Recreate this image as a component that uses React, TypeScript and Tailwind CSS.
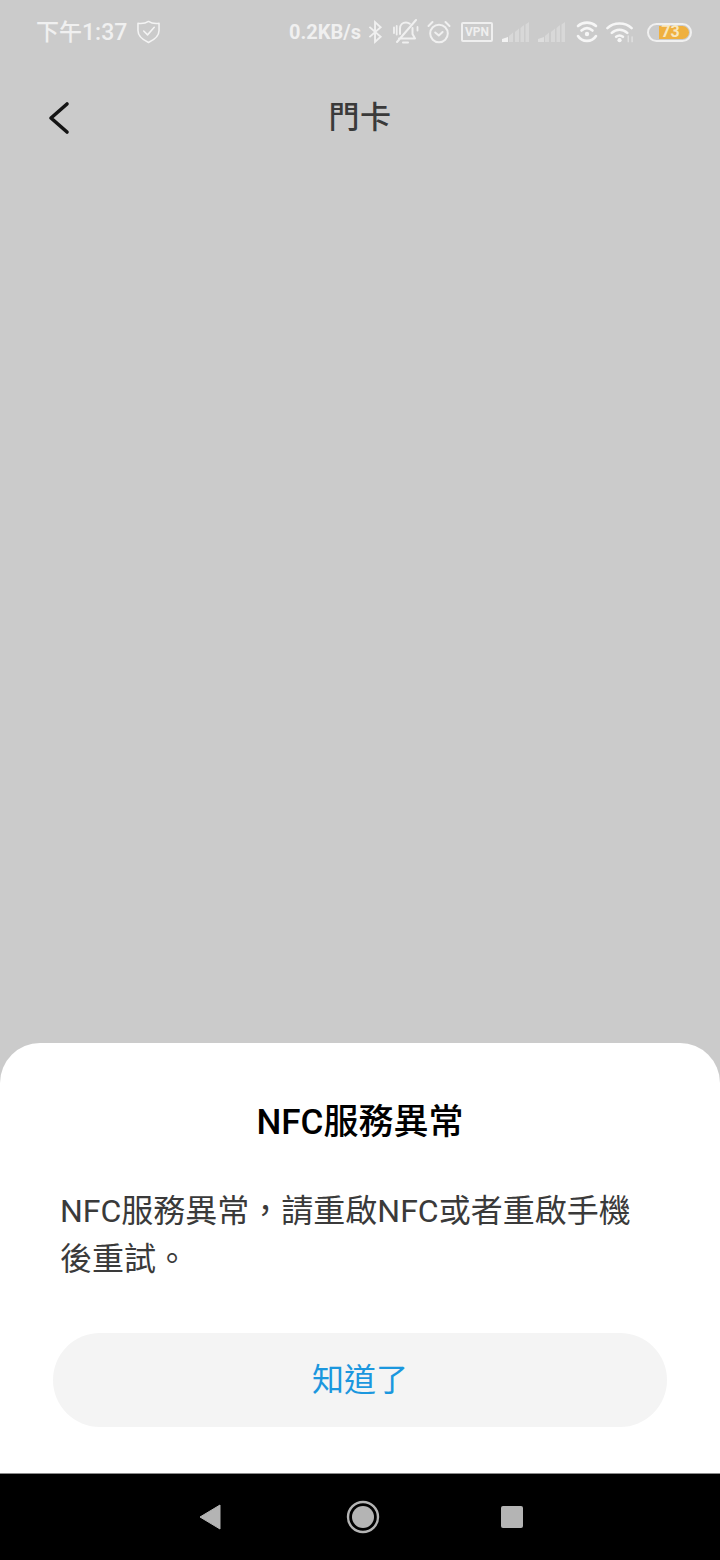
const cjk = "font-['Roboto','Noto_Sans_CJK_TC',sans-serif]";

function Shield() {
  return (
    <svg width="23" height="24" viewBox="0 0 24 25" fill="none" stroke="#f4f4f4" strokeWidth="1.6" strokeLinejoin="round" strokeLinecap="round">
      <path d="M12 1.5 C15 3.5 19 4 23 3.5 V11 C23 16.5 18.5 20.5 12 23.5 C5.5 20.5 1 16.5 1 11 V3.5 C5 4 9 3.5 12 1.5 Z" />
      <path d="M7 11.5 L11 15.5 L18 7.5" />
    </svg>
  );
}
function BT() {
  return (
    <svg width="15" height="24" viewBox="0 0 16 24" fill="none" stroke="#f0f0f0" strokeWidth="2">
      <path d="M1.5 6.5 L13.5 17 L7.5 22.5 V1.5 L13.5 7 L1.5 17.5" />
    </svg>
  );
}
function Bell() {
  return (
    <svg width="28" height="26" viewBox="0 0 28 26" fill="none" stroke="#f0f0f0" strokeWidth="2" strokeLinecap="round" strokeLinejoin="round">
      <path d="M8 15 V9.5 C8 6 10.5 3.5 14 3.5 C15.5 3.5 16.8 4 17.8 4.8" />
      <path d="M20.5 9 V15 L23 19.5 H7 M24 1 L5 23 M11 23.5 H16" />
      <path d="M2 8.5 V14 M4.7 7 V15.5 M25.5 8 V11.5" strokeWidth="1.8" />
    </svg>
  );
}
function Alarm() {
  return (
    <svg width="24" height="24" viewBox="0 0 24 24" fill="none" stroke="#f0f0f0" strokeWidth="2" strokeLinecap="round" strokeLinejoin="round">
      <circle cx="12" cy="13.5" r="8.8" />
      <path d="M8.2 12.5 L11.8 15.5 L15.6 12 M1.5 6 L5.5 2 M22.5 6 L18.5 2" />
    </svg>
  );
}
function Signal({ dim }: { dim?: boolean }) {
  const bars = [
    [0, 6, 17, 15],
    [7, 11, 14, 10.5],
    [13, 17, 10, 6.5],
    [18.5, 22, 6, 3],
    [23.5, 27, 2.5, 0],
  ];
  return (
    <svg width="27" height="20" viewBox="0 0 27 20">
      {bars.map(([a, b, t1, t2], i) => (
        <polygon
          key={i}
          points={`${a},20 ${a},${t1} ${b},${t2} ${b},20`}
          fill={i === 0 && !dim ? "#f2f2f2" : i === 0 ? "#dedede" : "#d8d8d8"}
        />
      ))}
    </svg>
  );
}
function WifiCall() {
  return (
    <svg width="22" height="22" viewBox="0 0 22 22" fill="none" stroke="#f6f6f6" strokeWidth="2.6" strokeLinecap="round">
      <path d="M2 5 C7 0.5 15 0.5 20 5 M5.5 9.5 C9 6.5 13 6.5 16.5 9.5 M2 15 C6 21.5 16 21.5 20 15" />
      <circle cx="11" cy="13" r="2.2" fill="#f6f6f6" stroke="none" />
    </svg>
  );
}
function Wifi() {
  return (
    <svg width="29" height="22" viewBox="0 0 30 22" fill="none" stroke="#f6f6f6" strokeWidth="2.6" strokeLinecap="round">
      <path d="M1.5 7 C8 0.5 20 0.5 26.5 7 M6 12 C10.5 7.5 17.5 7.5 22 12 M10.5 16 C12.5 14.5 15.5 14.5 17.5 16" />
      <circle cx="14" cy="19.5" r="2.2" fill="#f6f6f6" stroke="none" />
      <path d="M23 15 V21 M27 16 V21" strokeWidth="1.4" stroke="#e2e2e2" />
    </svg>
  );
}

export default function App() {
  return (
    <div className={`w-[720px] h-[1560px] flex flex-col bg-[#cbcbcb] overflow-hidden ${cjk}`}>
      <div className="h-[64px] flex items-center justify-between pl-[36px] pr-[28px] shrink-0">
        <div className="flex items-center gap-[10px]">
          <span className="text-[23px] leading-none font-medium text-[#f0f0f0]">下午1:37</span>
          <Shield />
        </div>
        <div className="flex items-center">
          <span className="text-[20px] leading-none font-bold text-[#f0f0f0]">0.2KB/s</span>
          <span className="ml-[7px]"><BT /></span>
          <span className="ml-[9px]"><Bell /></span>
          <span className="ml-[7px]"><Alarm /></span>
          <span className="ml-[10px] w-[32px] h-[20px] border-2 border-[#efefef] rounded-[2px] flex items-center justify-center text-[12px] leading-none font-bold text-[#efefef]">VPN</span>
          <span className="ml-[9px]"><Signal /></span>
          <span className="ml-[9px]"><Signal dim /></span>
          <span className="ml-[11px]"><WifiCall /></span>
          <span className="ml-[8px]"><Wifi /></span>
          <span className="ml-[12px] w-[45px] h-[19px] rounded-full border-2 border-[#f0f0f0] relative overflow-hidden flex items-center justify-center">
            <span className="absolute right-[1px] top-[1px] bottom-[1px] w-[30px] bg-[#efb03f] rounded-r-full" />
            <span className="relative text-[16px] leading-none font-bold text-[#f7e7c0] pl-[2px]">73</span>
          </span>
        </div>
      </div>

      <div className="h-[106px] relative flex items-center justify-center shrink-0">
        <svg className="absolute left-[48px] top-[37px]" width="22" height="34" viewBox="0 0 22 34" fill="none" stroke="#151515" strokeWidth="3.6" strokeLinecap="round" strokeLinejoin="round">
          <path d="M19 3 L3 17 L19 31" />
        </svg>
        <span className="text-[31px] leading-none font-medium text-[#3a3a3a] tracking-[0.5px]">門卡</span>
      </div>

      <div className="flex-1" />

      <div className="h-[430px] shrink-0 bg-white rounded-t-[40px] flex flex-col">
        <div className="text-center text-[35px] leading-none font-medium text-black mt-[62px]">NFC服務異常</div>
        <p className="mt-[47px] ml-[60px] mr-[81px] text-[32px] leading-[48px] text-[#3a3a3a]">
          NFC服務異常，請重啟NFC或者重啟手機後重試。
        </p>
        <div className="mt-[50px] mx-[53px] h-[94px] rounded-[47px] bg-[#f4f4f4] flex items-center justify-center text-[32px] leading-none text-[#1b97de]">
          知道了
        </div>
      </div>

      <div className="h-[87px] shrink-0 bg-black border-t border-[#8a8a8a] relative flex items-center">
        <svg className="ml-[199px]" width="22" height="26" viewBox="0 0 22 26"><path d="M21 1 V25 L1 13 Z" fill="#b4b4b4" stroke="#b4b4b4" strokeLinejoin="round" /></svg>
        <svg className="ml-[125px]" width="34" height="34" viewBox="0 0 34 34">
          <circle cx="17" cy="17" r="15" fill="none" stroke="#b4b4b4" strokeWidth="2.4" />
          <circle cx="17" cy="17" r="11" fill="#b4b4b4" />
        </svg>
        <div className="ml-[121px] w-[22px] h-[22px] rounded-[2px] bg-[#b4b4b4]" />
      </div>
    </div>
  );
}
